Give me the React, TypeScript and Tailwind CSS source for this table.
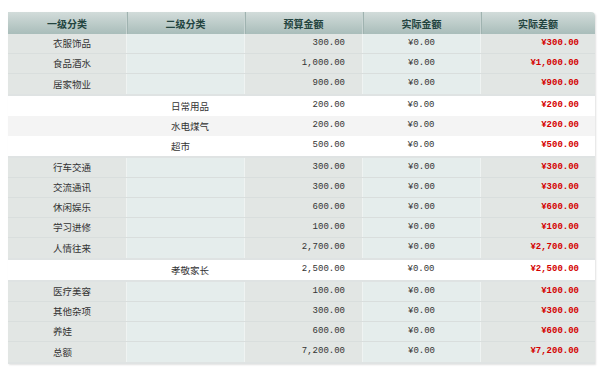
const cjk = '[font-family:"Noto_Sans_CJK_SC","Noto_Sans",sans-serif]';
const mono = '[font-family:"Liberation_Mono","DejaVu_Sans_Mono",monospace]';

type Row = { first?: string; second?: string; budget: string; diff: string };

const groups: { kind: 'main' | 'sub'; rows: Row[] }[] = [
  {
    kind: 'main',
    rows: [
      { first: '衣服饰品', budget: '300.00', diff: '¥300.00' },
      { first: '食品酒水', budget: '1,000.00', diff: '¥1,000.00' },
      { first: '居家物业', budget: '900.00', diff: '¥900.00' },
    ],
  },
  {
    kind: 'sub',
    rows: [
      { second: '日常用品', budget: '200.00', diff: '¥200.00' },
      { second: '水电煤气', budget: '200.00', diff: '¥200.00' },
      { second: '超市', budget: '500.00', diff: '¥500.00' },
    ],
  },
  {
    kind: 'main',
    rows: [
      { first: '行车交通', budget: '300.00', diff: '¥300.00' },
      { first: '交流通讯', budget: '300.00', diff: '¥300.00' },
      { first: '休闲娱乐', budget: '600.00', diff: '¥600.00' },
      { first: '学习进修', budget: '100.00', diff: '¥100.00' },
      { first: '人情往来', budget: '2,700.00', diff: '¥2,700.00' },
    ],
  },
  {
    kind: 'sub',
    rows: [{ second: '孝敬家长', budget: '2,500.00', diff: '¥2,500.00' }],
  },
  {
    kind: 'main',
    rows: [
      { first: '医疗美容', budget: '100.00', diff: '¥100.00' },
      { first: '其他杂项', budget: '300.00', diff: '¥300.00' },
      { first: '养娃', budget: '600.00', diff: '¥600.00' },
      { first: '总额', budget: '7,200.00', diff: '¥7,200.00' },
    ],
  },
];

const cols = 'grid grid-cols-[118px_118px_118px_118px_115px]';

function MainRow({ row, last }: { row: Row; last: boolean }) {
  return (
    <div className={`${cols} h-[20px] text-[9.5px] text-[#333] ${last ? '' : 'border-b border-[#d9dedd]'}`}>
      <div className={`bg-[#e2e6e4] pl-[45px] flex items-center ${cjk}`}>{row.first}</div>
      <div className="bg-[#e5edec] border-l border-[#eff3f2]" />
      <div className={`bg-[#e2e6e4] border-l border-[#eff3f2] flex items-center justify-end pr-[17px] ${mono} text-[9px]`}>
        {row.budget}
      </div>
      <div className={`bg-[#e5edec] border-l border-[#eff3f2] flex items-center justify-center ${mono} text-[9px]`}>
        ¥0.00
      </div>
      <div className={`bg-[#e2e6e4] border-l border-[#eff3f2] flex items-center justify-end pr-[16px] ${mono} text-[9px] font-bold text-[#d40000]`}>
        {row.diff}
      </div>
    </div>
  );
}

function SubRow({ row, odd }: { row: Row; odd: boolean }) {
  return (
    <div className={`${cols} h-[20px] text-[9.5px] text-[#333] ${odd ? 'bg-[#f4f4f4]' : 'bg-white'}`}>
      <div />
      <div className={`pl-[45px] flex items-center ${cjk}`}>{row.second}</div>
      <div className={`flex items-center justify-end pr-[17px] ${mono} text-[9px]`}>{row.budget}</div>
      <div className={`flex items-center justify-center ${mono} text-[9px]`}>¥0.00</div>
      <div className={`flex items-center justify-end pr-[16px] ${mono} text-[9px] font-bold text-[#d40000]`}>{row.diff}</div>
    </div>
  );
}

export default function App() {
  const heads = ['一级分类', '二级分类', '预算金额', '实际金额', '实际差额'];
  return (
    <div className="w-[600px] h-[369px] bg-white pt-[12px] pl-[8px]">
      <div className="w-[587px] shadow-[1px_1px_2px_rgba(0,0,0,0.12)] rounded-tr-[4px]">
        <div className={`${cols} h-[22px] rounded-tr-[4px] overflow-hidden bg-gradient-to-b from-[#d2dcda] to-[#a9bdba]`}>
          {heads.map((h, i) => (
            <div
              key={h}
              className={`flex items-center justify-center text-[10px] font-bold text-[#23443f] ${cjk} ${
                i > 0 ? 'border-l border-[#c9d5d3] shadow-[inset_1px_0_0_#9fb3b0]' : ''
              }`}
            >
              {h}
            </div>
          ))}
        </div>
        {groups.map((g, gi) => (
          <div key={gi} className={gi > 0 ? 'border-t-2 border-[#dfe3e3]' : ''}>
            {g.rows.map((r, ri) =>
              g.kind === 'main' ? (
                <MainRow key={ri} row={r} last={ri === g.rows.length - 1} />
              ) : (
                <SubRow key={ri} row={r} odd={ri % 2 === 1} />
              )
            )}
          </div>
        ))}
        <div className="h-[2px] bg-[#dfe3e3]" />
      </div>
    </div>
  );
}
